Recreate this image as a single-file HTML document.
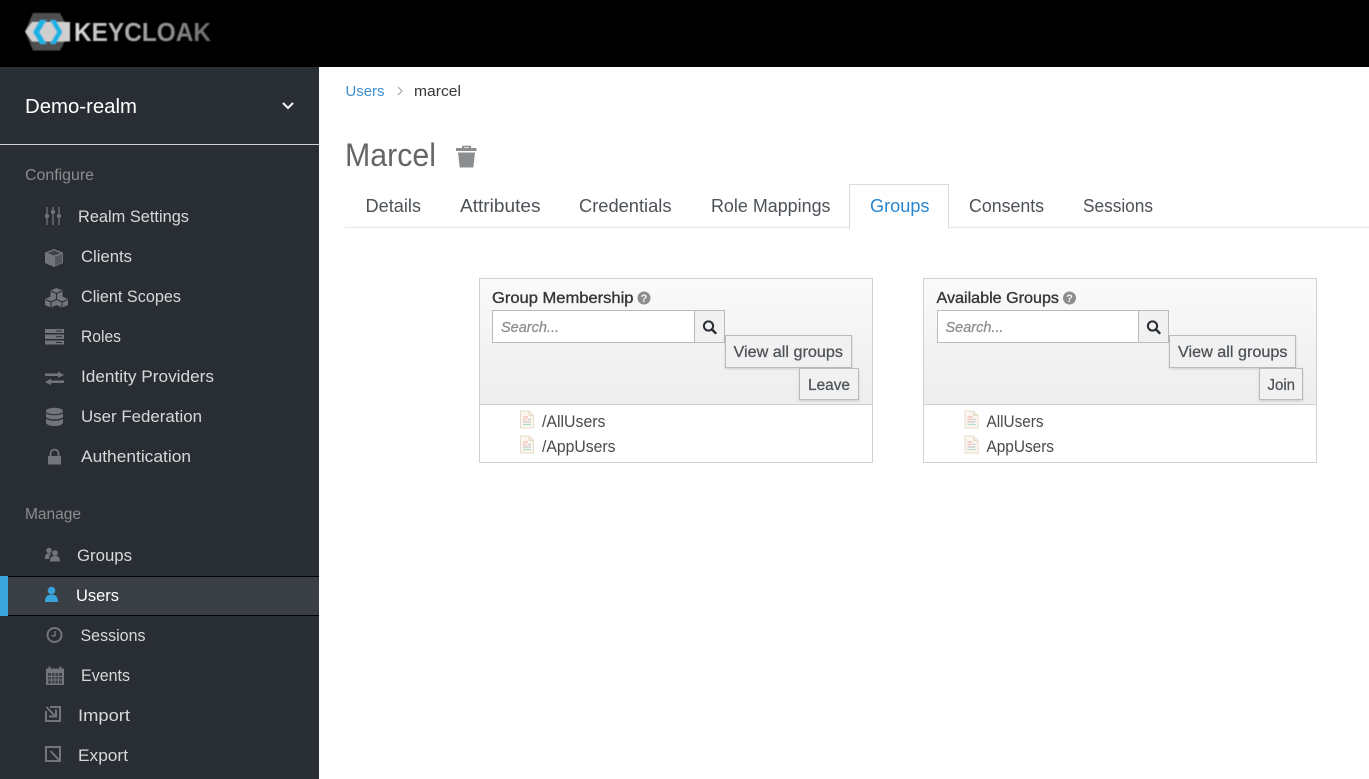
<!DOCTYPE html>
<html>
<head>
<meta charset="utf-8">
<title>Keycloak</title>
<style>
html,body{margin:0;padding:0;background:#fff;overflow:hidden}
svg{display:block}
text{font-family:"Liberation Sans",sans-serif}
.n{font-size:16.5px;fill:#d8d8d8}
.h{font-size:15.5px;fill:#8b8d8f}
.i{fill:#72767b}
.s{fill:none;stroke:#72767b}
.t{font-size:18px;fill:#4d5258}
.b{font-size:15.5px;fill:#4d5258;stroke:#4d5258;stroke-width:.25px}
.g{font-size:15.5px;fill:#363636;stroke:#363636;stroke-width:.35px}
.p{font-size:15px;font-style:italic;fill:#8f8f8f;stroke:#8f8f8f;stroke-width:.3px}
.l{font-size:16.5px;fill:#4a4a4a}
.btn{fill:#f1f1f1;stroke:#bbb;filter:url(#sh)}
</style>
</head>
<body>
<svg xmlns="http://www.w3.org/2000/svg" width="1369" height="779" viewBox="0 0 1369 779">
<defs>
<linearGradient id="hd" x1="0" y1="0" x2="0" y2="1"><stop offset="0" stop-color="#fafafa"/><stop offset="1" stop-color="#ededed"/></linearGradient>
<linearGradient id="kc" x1="0" y1="0" x2="1" y2="0"><stop offset="0" stop-color="#d8d8d8"/><stop offset=".5" stop-color="#a0a0a0"/><stop offset="1" stop-color="#6a6a6a"/></linearGradient>
<filter id="sh" x="-10%" y="-10%" width="120%" height="130%"><feDropShadow dx="0" dy="1" stdDeviation="1" flood-color="#000" flood-opacity=".15"/></filter>
<filter id="bl"><feGaussianBlur stdDeviation=".5"/></filter>
<g id="doc">
<path d="M.5.5H9L13.5 5V17.5H.5Z" fill="#fbf6f0" stroke="#e6dcc8"/>
<path d="M9 .5V5H13.5" fill="#efe9d9" stroke="#e6dcc8"/>
<path d="M3 6.500H8M3 9H7" stroke="#f5c4bd" stroke-width="1.400"/>
<path d="M8 9H11M3 11.500H11" stroke="#c9c9c9" stroke-width="1.200"/>
<path d="M3 14H11" stroke="#b0dccb" stroke-width="1.200"/>
</g>
<g id="q">
<circle cx="0" cy="0" r="6.500" fill="#8b8d8f"/>
<text x="0" y="4" text-anchor="middle" style="font-size:11px;font-weight:bold;fill:#f7f7f7">?</text>
</g>
<g id="mag">
<circle cx="-1" cy="-1" r="4.600" fill="none" stroke="#292e34" stroke-width="2"/>
<path d="M2.400 2.400L6 6" stroke="#292e34" stroke-width="2.400" stroke-linecap="round"/>
</g>
</defs>

<!-- page -->
<rect width="1369" height="779" fill="#fff"/>
<rect width="1369" height="67" fill="#000"/>

<!-- logo -->
<g filter="url(#bl)">
<path d="M33 13H60L70 31.500L60 50.500H33L25 31.500Z" fill="#4f4f4f"/>
<path d="M32 22H70V41.500H32L25 31.500Z" fill="#cfcfcf"/>
<path d="M40 20L33 32L40 44H46.500L39.500 32L46.500 20Z" fill="#1fb2e4"/>
<path d="M50 20H55.500L62.500 32L55.500 44H50L57 32Z" fill="#1fb2e4"/>
<text x="74" y="41" textLength="137" lengthAdjust="spacingAndGlyphs" style="font-size:25.500px;font-weight:bold;fill:url(#kc)">KEYCLOAK</text>
</g>

<!-- sidebar -->
<rect y="67" width="319" height="712" fill="#292e34"/>
<text x="25" y="113" textLength="112" lengthAdjust="spacingAndGlyphs" style="font-size:20.500px;fill:#fff">Demo-realm</text>
<path d="M283 103L288 108L293 103" fill="none" stroke="#fff" stroke-width="2"/>
<rect y="144" width="319" height="1" fill="#d1d1d1"/>

<text class="h" x="25" y="180" textLength="69" lengthAdjust="spacingAndGlyphs">Configure</text>
<text class="n" x="78" y="222" textLength="111" lengthAdjust="spacingAndGlyphs">Realm Settings</text>
<text class="n" x="81" y="262" textLength="51" lengthAdjust="spacingAndGlyphs">Clients</text>
<text class="n" x="81" y="302" textLength="100" lengthAdjust="spacingAndGlyphs">Client Scopes</text>
<text class="n" x="81" y="342" textLength="40" lengthAdjust="spacingAndGlyphs">Roles</text>
<text class="n" x="81" y="382" textLength="133" lengthAdjust="spacingAndGlyphs">Identity Providers</text>
<text class="n" x="81" y="422" textLength="121" lengthAdjust="spacingAndGlyphs">User Federation</text>
<text class="n" x="81" y="462" textLength="110" lengthAdjust="spacingAndGlyphs">Authentication</text>

<text class="h" x="25" y="519" textLength="56" lengthAdjust="spacingAndGlyphs">Manage</text>
<rect y="576" width="319" height="40" fill="#393f44"/>
<rect y="576" width="319" height="1" fill="#030303"/>
<rect y="615" width="319" height="1" fill="#030303"/>
<rect y="576" width="8" height="40" fill="#39a5dc"/>
<text class="n" x="77" y="561" textLength="55" lengthAdjust="spacingAndGlyphs">Groups</text>
<text class="n" x="76" y="601" textLength="43" lengthAdjust="spacingAndGlyphs" style="fill:#fff">Users</text>
<text class="n" x="80.500" y="641" textLength="65" lengthAdjust="spacingAndGlyphs">Sessions</text>
<text class="n" x="81" y="681" textLength="49" lengthAdjust="spacingAndGlyphs">Events</text>
<text class="n" x="78" y="721" textLength="52" lengthAdjust="spacingAndGlyphs">Import</text>
<text class="n" x="78" y="761" textLength="50" lengthAdjust="spacingAndGlyphs">Export</text>

<!-- sidebar icons -->
<!-- sliders -->
<path class="s" stroke-width="1.300" d="M47 207V225M53 207V225M59 207V225"/>
<path class="i" d="M45 214.500h4v3h-4zM51 210.500h4v3h-4zM57 214.500h4v3h-4z"/>
<!-- cube -->
<path class="i" d="M54 249L63 252.500V263L54 267L45 263V252.500Z"/>
<path d="M54 250.500L60.500 253L54 255.500L47.500 253Z" fill="#3c4046"/>
<path d="M55 257L62 254V262.500L55 265.500Z" fill="#54585d"/>
<!-- cubes -->
<path class="i" d="M56.500 288L62.500 290.500V296.500L68 299V305L62 307.500L56.500 305L51 307.500L45 305V299L50.500 296.500V290.500Z"/>
<path d="M51 291L56.500 293.500L62 291M45.500 299.500L51 302L56.500 299.500L62 302L67.500 299.500M56.500 293.500V299.500M51 302V307M62 302V307" fill="none" stroke="#292e34" stroke-width="1.100"/>
<!-- roles -->
<path class="i" d="M45 329h19v4H45zM45 334.500h19v4.500H45zM45 340.500h19v4H45z"/>
<path d="M56 331h6M56 336.700h6M56 342.500h6" stroke="#292e34" stroke-width="1"/>
<!-- arrows -->
<path class="i" d="M45 373.500H58V371.500L64 375L58 378V376H45Z"/>
<path class="i" d="M64 380.500H51V378.500L45 382L51 385V383H64Z"/>
<!-- db -->
<ellipse class="i" cx="54.500" cy="411" rx="8.500" ry="3.200"/>
<path class="i" d="M46 413c2 3 15 3 17 0v4c-2 3-15 3-17 0zM46 418.500c2 3 15 3 17 0v4.500c-2 4-15 4-17 0z"/>
<!-- lock -->
<path class="i" d="M48 456h13v8.500H48z"/>
<path class="s" stroke-width="1.800" d="M50.500 456.500v-3a4 4 0 0 1 8 0v3"/>
<!-- groups -->
<circle class="i" cx="49" cy="550.500" r="2.800"/>
<circle class="i" cx="55" cy="553" r="2.800"/>
<path class="i" d="M45 559c0-5 1.500-5.500 4-5.500 1 0 1.500.2 2 .6-1.500 1-2 3-2 4.900zM50 561.500c0-4.500 1.500-5.500 5-5.500s5 1 5 5.500z"/>
<!-- user -->
<circle cx="51.500" cy="590.500" r="3.800" fill="#39a5dc"/>
<path d="M45 602c0-5.500 2.500-7.500 6.500-7.500S58 596.500 58 602z" fill="#39a5dc"/>
<!-- clock -->
<circle class="s" stroke-width="2" cx="54.500" cy="635" r="7"/>
<path class="s" stroke-width="1.500" d="M55 631V635.800H51.500"/>
<!-- calendar -->
<path class="i" d="M46 668.500h18v16.500H46z"/>
<path d="M48 673h14v10.500H48z" fill="#3e4348"/>
<path class="s" stroke-width=".9" d="M48 676.500h14M48 680h14M51.500 673v10.500M55 673v10.500M58.500 673v10.500"/>
<path d="M49.500 666.500v4M60.500 666.500v4" stroke="#72767b" stroke-width="2"/>
<!-- import -->
<path class="s" stroke-width="2" d="M46 711V721H60V707H50"/>
<path class="s" stroke-width="2" d="M46.500 707L54.500 715.500M56 709.500V716.500H49"/>
<!-- export -->
<path class="s" stroke-width="2" d="M55 761H46V747H60V756"/>
<path class="s" stroke-width="2" d="M50.500 751L59 760M60 753.500V761H52.500"/>

<!-- breadcrumb -->
<text x="345.500" y="96" textLength="39" lengthAdjust="spacingAndGlyphs" style="font-size:15px;fill:#3d8fd0">Users</text>
<path d="M398 87L402 91L398 95" fill="none" stroke="#9c9c9c" stroke-width="1"/>
<text x="414" y="96" textLength="47" lengthAdjust="spacingAndGlyphs" style="font-size:15px;fill:#363636">marcel</text>

<!-- title -->
<text x="345" y="166" textLength="91" lengthAdjust="spacingAndGlyphs" style="font-size:32px;fill:#666">Marcel</text>
<path d="M462 148V145.800H471V148H476.500V151H456V148ZM464 148H469V147.200H464Z" fill="#8b8d8f" fill-rule="evenodd"/>
<path d="M458 152.500H475L473.300 167.500H459.700Z" fill="#8b8d8f"/>

<!-- tabs -->
<rect x="345" y="227" width="1024" height="1" fill="#e6e6e6"/>
<rect x="849.500" y="184.500" width="99" height="44" fill="#fff" stroke="#dcdcdc"/>
<rect x="850" y="226" width="98" height="3" fill="#fff"/>
<text class="t" x="365.500" y="212" textLength="55.500" lengthAdjust="spacingAndGlyphs">Details</text>
<text class="t" x="460" y="212" textLength="80.500" lengthAdjust="spacingAndGlyphs">Attributes</text>
<text class="t" x="579" y="212" textLength="92.500" lengthAdjust="spacingAndGlyphs">Credentials</text>
<text class="t" x="711" y="212" textLength="119.500" lengthAdjust="spacingAndGlyphs">Role Mappings</text>
<text class="t" x="870" y="212" textLength="59.500" lengthAdjust="spacingAndGlyphs" style="fill:#2a86cf">Groups</text>
<text class="t" x="969" y="212" textLength="75" lengthAdjust="spacingAndGlyphs">Consents</text>
<text class="t" x="1083" y="212" textLength="70" lengthAdjust="spacingAndGlyphs">Sessions</text>

<!-- panel 1 -->
<rect x="479.500" y="278.500" width="393" height="184" fill="#fff" stroke="#d1d1d1"/>
<rect x="480" y="279" width="392" height="125" fill="url(#hd)"/>
<rect x="480" y="404" width="392" height="1" fill="#d1d1d1"/>
<text class="g" x="492" y="303" textLength="141.500" lengthAdjust="spacingAndGlyphs">Group Membership</text>
<use href="#q" x="644" y="298"/>
<rect x="492.500" y="310.500" width="202" height="32" fill="#fff" stroke="#bbb"/>
<text class="p" x="501" y="332" textLength="58" lengthAdjust="spacingAndGlyphs">Search...</text>
<rect x="694.500" y="310.500" width="30" height="32" fill="#f1f1f1" stroke="#bbb"/>
<use href="#mag" x="709.500" y="327"/>
<rect class="btn" x="725.500" y="335.500" width="126" height="32"/>
<text class="b" x="733.500" y="357" textLength="109.500" lengthAdjust="spacingAndGlyphs">View all groups</text>
<rect class="btn" x="799.500" y="368.500" width="59" height="31"/>
<text class="b" x="808" y="390" textLength="42" lengthAdjust="spacingAndGlyphs">Leave</text>
<use href="#doc" x="520" y="410.500"/>
<use href="#doc" x="520" y="435.500"/>
<text class="l" x="542" y="427" textLength="63.500" lengthAdjust="spacingAndGlyphs">/AllUsers</text>
<text class="l" x="542" y="452" textLength="73.500" lengthAdjust="spacingAndGlyphs">/AppUsers</text>

<!-- panel 2 -->
<rect x="923.500" y="278.500" width="393" height="184" fill="#fff" stroke="#d1d1d1"/>
<rect x="924" y="279" width="392" height="125" fill="url(#hd)"/>
<rect x="924" y="404" width="392" height="1" fill="#d1d1d1"/>
<text class="g" x="936.500" y="303" textLength="122.500" lengthAdjust="spacingAndGlyphs">Available Groups</text>
<use href="#q" x="1069.500" y="298"/>
<rect x="937.500" y="310.500" width="201" height="32" fill="#fff" stroke="#bbb"/>
<text class="p" x="945.500" y="332" textLength="58" lengthAdjust="spacingAndGlyphs">Search...</text>
<rect x="1138.500" y="310.500" width="30" height="32" fill="#f1f1f1" stroke="#bbb"/>
<use href="#mag" x="1153.500" y="327"/>
<rect class="btn" x="1169.500" y="335.500" width="126" height="32"/>
<text class="b" x="1178" y="357" textLength="109.500" lengthAdjust="spacingAndGlyphs">View all groups</text>
<rect class="btn" x="1259.500" y="368.500" width="43" height="31"/>
<text class="b" x="1267.500" y="390" textLength="27.500" lengthAdjust="spacingAndGlyphs">Join</text>
<use href="#doc" x="964.500" y="410.500"/>
<use href="#doc" x="964.500" y="435.500"/>
<text class="l" x="986.500" y="427" textLength="57" lengthAdjust="spacingAndGlyphs">AllUsers</text>
<text class="l" x="986.500" y="452" textLength="67.500" lengthAdjust="spacingAndGlyphs">AppUsers</text>
</svg>
</body>
</html>
